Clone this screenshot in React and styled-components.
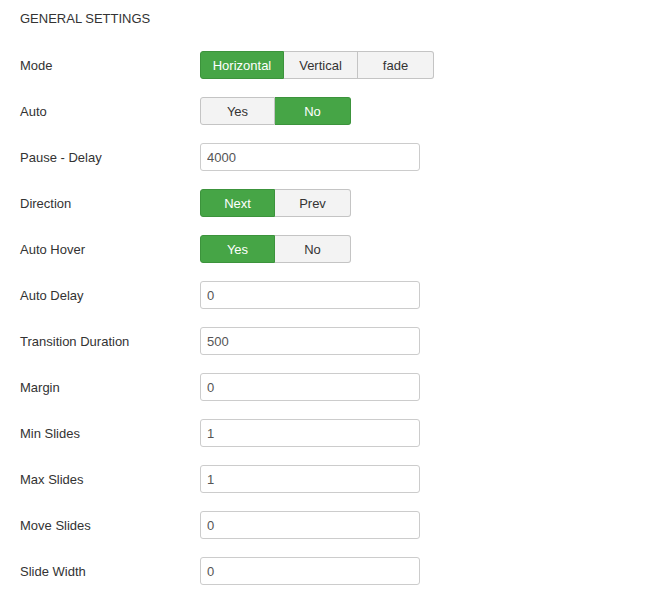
import React from "react";
import styled, { createGlobalStyle } from "styled-components";

const Global = createGlobalStyle`
  html, body { margin: 0; padding: 0; background: #fff; }
  body { font-family: "Liberation Sans", Arial, sans-serif; font-size: 13px; color: #333; }
`;

const Page = styled.div`
  padding: 10px 20px;
`;

const Title = styled.h3`
  margin: 0 0 23px;
  font-size: 13px;
  font-weight: normal;
  line-height: 18px;
  text-transform: uppercase;
  color: #333;
`;

const Form = styled.div`
  display: flex;
  flex-direction: column;
  gap: 18px;
`;

const Row = styled.div`
  display: flex;
  align-items: center;
  height: 28px;
`;

const Label = styled.label`
  width: 180px;
  flex: none;
  line-height: 18px;
  padding-top: 2px;
`;

const Group = styled.div`
  display: flex;
`;

const Btn = styled.button`
  width: ${(p) => p.$w}px;
  height: 28px;
  box-sizing: border-box;
  margin: 0;
  padding: 2px 0 0;
  font-family: inherit;
  font-size: 13px;
  line-height: 18px;
  text-align: center;
  cursor: pointer;
  background: ${(p) => (p.$active ? "#46a546" : "#f3f3f3")};
  color: ${(p) => (p.$active ? "#fff" : "#333")};
  border: 1px solid ${(p) => (p.$active ? "#3c933c" : "#c4c4c4")};
  border-left-width: ${(p) => (p.$first ? 1 : 0)}px;
  border-radius: 0;
  &:first-child { border-radius: 3px 0 0 3px; }
  &:last-child { border-radius: 0 3px 3px 0; }
`;

const Input = styled.input`
  width: 220px;
  height: 28px;
  box-sizing: border-box;
  padding: 4px 6px;
  font-family: inherit;
  font-size: 13px;
  color: #555;
  border: 1px solid #ccc;
  border-radius: 3px;
  background: #fff;
  outline: none;
`;

const rows = [
  { label: "Mode", type: "group", options: ["Horizontal", "Vertical", "fade"], widths: [84, 74, 76], active: 0 },
  { label: "Auto", type: "group", options: ["Yes", "No"], widths: [75, 76], active: 1 },
  { label: "Pause - Delay", type: "input", value: "4000" },
  { label: "Direction", type: "group", options: ["Next", "Prev"], widths: [75, 76], active: 0 },
  { label: "Auto Hover", type: "group", options: ["Yes", "No"], widths: [75, 76], active: 0 },
  { label: "Auto Delay", type: "input", value: "0" },
  { label: "Transition Duration", type: "input", value: "500" },
  { label: "Margin", type: "input", value: "0" },
  { label: "Min Slides", type: "input", value: "1" },
  { label: "Max Slides", type: "input", value: "1" },
  { label: "Move Slides", type: "input", value: "0" },
  { label: "Slide Width", type: "input", value: "0" },
];

export default function App() {
  return (
    <Page>
      <Global />
      <Title>General Settings</Title>
      <Form>
        {rows.map((r) => (
          <Row key={r.label}>
            <Label>{r.label}</Label>
            {r.type === "group" ? (
              <Group>
                {r.options.map((o, i) => (
                  <Btn key={o} $w={r.widths[i]} $first={i === 0} $active={i === r.active}>
                    {o}
                  </Btn>
                ))}
              </Group>
            ) : (
              <Input defaultValue={r.value} />
            )}
          </Row>
        ))}
      </Form>
    </Page>
  );
}
